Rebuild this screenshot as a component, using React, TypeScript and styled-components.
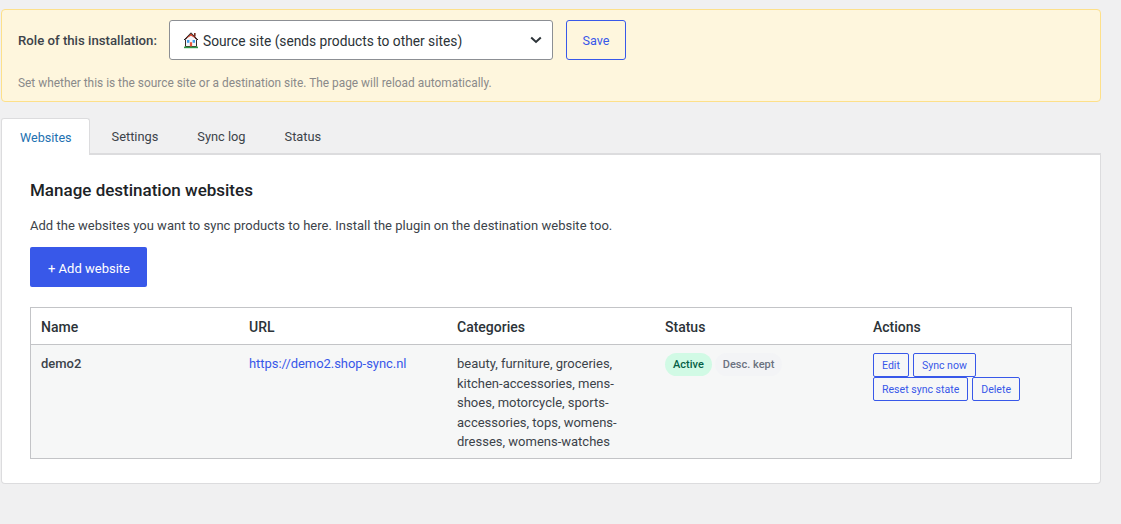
import React from "react";
import styled, { createGlobalStyle } from "styled-components";

const Global = createGlobalStyle`
  html, body { margin: 0; padding: 0; }
  body {
    background: #f0f0f1;
    font-family: Roboto, "Noto Sans", sans-serif;
    font-size: 13px;
    color: #3c434a;
  }
`;

const sites = [
  {
    name: "demo2",
    url: "https://demo2.shop-sync.nl",
    categories:
      "beauty, furniture, groceries, kitchen-accessories, mens-shoes, motorcycle, sports-accessories, tops, womens-dresses, womens-watches",
  },
];

const tabs = ["Websites", "Settings", "Sync log", "Status"];

const HouseIcon = () => (
  <svg width="16" height="18" viewBox="0 0 16 18">
    <path d="M2.5 8.5v7h11v-7L8 3z" fill="#f3f6fb" stroke="#3a2a2a" strokeWidth="1" />
    <path d="M1 9 8 1.8 15 9" fill="none" stroke="#1f1a1a" strokeWidth="1" />
    <path d="M2.5 8 8 2.8 13.5 8 8 4.8z" fill="#d9482f" />
    <rect x="11" y="2" width="1.6" height="3.5" fill="#7a2f22" />
    <rect x="4" y="9" width="2.4" height="2.8" fill="#3f9ee8" />
    <rect x="9.6" y="9" width="2.4" height="2.8" fill="#3f9ee8" />
    <rect x="6.9" y="11.2" width="2.2" height="4.4" fill="#e8573f" />
    <rect x="1" y="15.6" width="14" height="1.6" fill="#2f9a46" />
  </svg>
);

const App = () => {
  return (
    <Page>
      <Global />
      <Notice>
        <RoleRow>
          <RoleLabel>Role of this installation:</RoleLabel>
          <SelectBox>
            <HouseIcon />
            <SelectText>Source site (sends products to other sites)</SelectText>
            <svg width="12" height="8" viewBox="0 0 12 8">
              <path d="M1.2 1.5 6 6l4.8-4.5" fill="none" stroke="#2c3338" strokeWidth="2" />
            </svg>
          </SelectBox>
          <SaveButton>Save</SaveButton>
        </RoleRow>
        <Hint>Set whether this is the source site or a destination site. The page will reload automatically.</Hint>
      </Notice>

      <TabBar>
        {tabs.map((t, i) => (
          <Tab key={t} $active={i === 0}>
            {t}
          </Tab>
        ))}
      </TabBar>

      <Card>
        <Heading>Manage destination websites</Heading>
        <Intro>Add the websites you want to sync products to here. Install the plugin on the destination website too.</Intro>
        <AddButton>+ Add website</AddButton>
        <Table>
          <thead>
            <tr>
              <Th>Name</Th>
              <Th>URL</Th>
              <Th>Categories</Th>
              <Th>Status</Th>
              <Th>Actions</Th>
            </tr>
          </thead>
          <tbody>
            {sites.map((s) => (
              <tr key={s.name}>
                <Td>
                  <strong>{s.name}</strong>
                </Td>
                <Td>
                  <SiteLink href="#">{s.url}</SiteLink>
                </Td>
                <Td>{s.categories}</Td>
                <WidgetTd>
                  <Badges>
                    <Badge $tone="green">Active</Badge>
                    <Badge $tone="grey">Desc. kept</Badge>
                  </Badges>
                </WidgetTd>
                <WidgetTd>
                  <Actions>
                    <SmallButton>Edit</SmallButton>
                    <SmallButton>Sync now</SmallButton>
                    <SmallButton>Reset sync state</SmallButton>
                    <SmallButton>Delete</SmallButton>
                  </Actions>
                </WidgetTd>
              </tr>
            ))}
          </tbody>
        </Table>
      </Card>
    </Page>
  );
};

const Page = styled.div`
  width: 1100px;
  margin-left: 1px;
  padding-top: 9px;
`;

const Notice = styled.div`
  box-sizing: border-box;
  height: 93px;
  background: #fef6dd;
  border: 1px solid #fde08a;
  border-radius: 4px;
  padding: 10px 16px;
`;

const RoleRow = styled.div`
  display: flex;
  align-items: center;
`;

const RoleLabel = styled.span`
  font-weight: 500;
  font-size: 13.2px;
  width: 151px;
  padding-top: 1px;
`;

const SelectBox = styled.div`
  box-sizing: border-box;
  width: 384px;
  height: 40px;
  background: #fff;
  border: 1px solid #8c8f94;
  border-radius: 3px;
  display: flex;
  align-items: center;
  padding: 0 10px 0 13px;
  font-size: 13.75px;
  color: #2c3338;
`;

const SelectText = styled.span`
  flex: 1;
  margin-left: 4px;
  padding-top: 1px;
`;

const SaveButton = styled.button`
  box-sizing: border-box;
  width: 60px;
  height: 40px;
  margin-left: 13px;
  padding: 1px 0 0;
  background: transparent;
  border: 1px solid #3858e9;
  border-radius: 3px;
  color: #3858e9;
  font: inherit;
  font-size: 12.6px;
`;

const Hint = styled.p`
  margin: 16px 0 0;
  font-size: 11.9px;
  color: #8a8a8a;
`;

const TabBar = styled.div`
  display: flex;
  margin-top: 16px;
  height: 35px;
  border-bottom: 2px solid #dcdcde;
  box-sizing: content-box;
`;

const Tab = styled.div<{ $active?: boolean }>`
  box-sizing: border-box;
  height: ${(p) => (p.$active ? "37px" : "35px")};
  padding: ${(p) => (p.$active ? "0 17px 0 18px" : "1px 17px 0 22px")};
  display: flex;
  align-items: center;
  font-size: ${(p) => (p.$active ? "12.6px" : "12.8px")};
  background: ${(p) => (p.$active ? "#fff" : "transparent")};
  color: ${(p) => (p.$active ? "#2271b1" : "#3c434a")};
  border: ${(p) => (p.$active ? "1px solid #dcdcde" : "none")};
  border-bottom: none;
  border-radius: 3px 3px 0 0;
`;

const Card = styled.div`
  box-sizing: border-box;
  height: 329px;
  background: #fff;
  border: 1px solid #dcdcde;
  border-top: none;
  border-radius: 0 0 4px 4px;
  padding: 24px 28px 0 28px;
`;

const Heading = styled.h2`
  margin: 0;
  font-size: 17px;
  line-height: 22px;
  font-weight: 500;
  color: #1d2327;
`;

const Intro = styled.p`
  margin: 15px 0 0;
  line-height: 20px;
  letter-spacing: 0.02px;
`;

const AddButton = styled.button`
  display: block;
  box-sizing: border-box;
  width: 117px;
  height: 40px;
  margin-top: 11px;
  padding: 2px 0 0 1px;
  background: #3858e9;
  border: none;
  border-radius: 2px;
  color: #fff;
  font: inherit;
`;

const Table = styled.table`
  box-sizing: border-box;
  width: 1042px;
  margin-top: 20px;
  border: 1px solid #c3c4c7;
  border-collapse: separate;
  border-spacing: 0;
  table-layout: fixed;
`;

const Th = styled.th`
  height: 34px;
  padding: 2px 10px 0;
  text-align: left;
  font-weight: 500;
  font-size: 14px;
  color: #2c3338;
  border-bottom: 1px solid #c3c4c7;
`;

const Td = styled.td`
  background: #f6f7f7;
  padding: 9px 10px 0;
  vertical-align: top;
  line-height: 19.5px;
  height: 104px;
  strong { font-weight: 500; }
`;

const WidgetTd = styled(Td)`
  padding-top: 8px;
  height: 105px;
`;

const SiteLink = styled.a`
  color: #3858e9;
  text-decoration: none;
  letter-spacing: -0.05px;
`;

const Badges = styled.div`
  display: flex;
  gap: 3px;
`;

const Badge = styled.span<{ $tone: "green" | "grey" }>`
  height: 23px;
  padding: 1px 8px 0;
  box-sizing: border-box;
  display: flex;
  align-items: center;
  border-radius: 12px;
  font-size: 11px;
  font-weight: 500;
  background: ${(p) => (p.$tone === "green" ? "#d1fae5" : "#f3f4f6")};
  color: ${(p) => (p.$tone === "green" ? "#065f46" : "#6b7280")};
`;

const Actions = styled.div`
  display: flex;
  flex-wrap: wrap;
  gap: 0 4px;
`;

const SmallButton = styled.button`
  box-sizing: border-box;
  height: 24px;
  padding: 1px 8px 0;
  background: transparent;
  border: 1px solid #3858e9;
  border-radius: 2px;
  color: #3858e9;
  font: inherit;
  font-size: 10.55px;
`;

export default App;
